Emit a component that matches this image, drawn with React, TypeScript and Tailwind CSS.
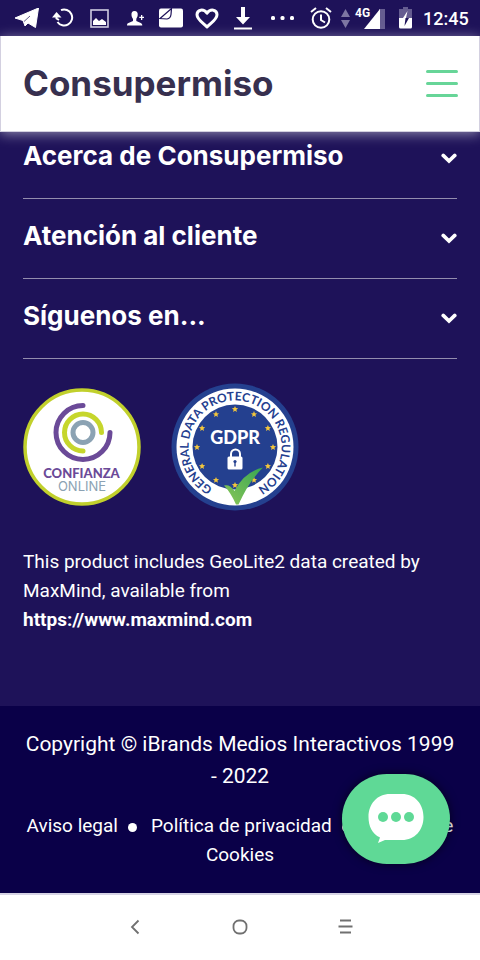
import type { ReactNode } from "react";

const sections = ["Acerca de Consupermiso", "Atención al cliente", "Síguenos en..."];

function StatusCell({ children }: { children: ReactNode }) {
  return <span className="flex w-9 shrink-0 justify-center">{children}</span>;
}

function StatusBar() {
  return (
    <div className="flex h-9 items-center bg-[#1e1259] pl-[9px] text-white">
      <StatusCell>
        <svg width="24" height="20" viewBox="0 0 24 20">
          <path d="M23.500 0 20.500 19.500 13 15l-3 3-2-5.500L0 10z" fill="currentColor" stroke="currentColor" strokeLinejoin="round" />
          <path d="m9 13.500 6-5.500" stroke="#1e1259" strokeWidth=".7" />
        </svg>
      </StatusCell>
      <StatusCell>
        <svg width="22" height="20" viewBox="0 0 22 20" fill="none">
          <path d="M9 2.200A8 8 0 1 1 5.500 14" stroke="currentColor" strokeWidth="2" />
          <path d="M4.500 7v3.500L7 12" stroke="currentColor" strokeWidth="2" />
          <path d="M0 9.500 4.500 4 9.500 9.500z" fill="currentColor" />
        </svg>
      </StatusCell>
      <StatusCell>
        <svg width="19" height="19" viewBox="0 0 19 19" fill="none">
          <rect x="1" y="1" width="17" height="17" stroke="#cfcce0" strokeWidth="1.600" />
          <path d="M3 16v-4l3-3 3 3 3-2 4 3v3z" fill="currentColor" />
        </svg>
      </StatusCell>
      <StatusCell>
        <svg width="17" height="15" viewBox="0 0 17 15" fill="currentColor">
          <path d="M7.500 0C10 0 11 1.700 10.700 4.200 10.500 6 9.500 7 9.300 8v2l4.500 2c1 .5 1.500 1.300 1.500 2.500H0C0 13 .5 12.300 1.500 12L6 10V8C5.500 7 4.700 6 4.500 4.200 4.300 1.700 5 0 7.500 0z" />
          <path d="M14 4h1.300v1.800H17v1.300h-1.700V9H14V7.100h-1.700V5.800H14z" />
        </svg>
      </StatusCell>
      <StatusCell>
        <svg width="24" height="20" viewBox="0 0 24 20">
          <rect width="24" height="19" y=".5" rx="2" fill="currentColor" />
          <path d="M1 10.500 12.500.5 12 6.500q-.5 4-4 4.500z" fill="currentColor" stroke="#1e1259" strokeWidth="1.200" />
        </svg>
      </StatusCell>
      <StatusCell>
        <svg width="24" height="21" viewBox="0 0 24 21" fill="none">
          <path
            d="M12 19C8 15 2 11.500 2 6.800 2 1.500 8.500.3 12 5.200 15.500.3 22 1.500 22 6.800 22 11.500 16 15 12 19z"
            stroke="currentColor"
            strokeWidth="3"
            strokeLinejoin="round"
          />
        </svg>
      </StatusCell>
      <StatusCell>
        <svg width="20" height="23" viewBox="0 0 20 23" fill="currentColor">
          <path d="M8 0h4v10h5l-7 7.500L3 10h5zM1 20.500h18v2H1z" />
        </svg>
      </StatusCell>
      <span className="flex w-11 shrink-0 justify-center">
        <svg width="24" height="4" viewBox="0 0 24 4" fill="currentColor">
          <rect width="4" height="4" rx="1.500" />
          <rect x="9.500" width="4" height="4" rx="1.500" />
          <rect x="19" width="4" height="4" rx="1.500" />
        </svg>
      </span>
      <span className="flex w-8 shrink-0 justify-center">
        <svg width="22" height="22" viewBox="0 0 22 22" fill="none" stroke="currentColor" strokeWidth="2">
          <circle cx="11" cy="12.500" r="8.300" />
          <path d="M11 7.500v5.500l4 2.500M1 5l5-4M21 5l-5-4" />
        </svg>
      </span>
      <span className="flex w-4 shrink-0 justify-center">
        <svg width="9" height="19" viewBox="0 0 9 19" fill="#7d76a2">
          <path d="M4.500 0 9 8H0zM4.500 19 0 11h9z" />
        </svg>
      </span>
      <svg className="shrink-0" width="34" height="24" viewBox="0 0 34 24">
        <path d="M26 3h6v20h-6z" fill="#655c90" />
        <path d="M11 23 27 3v20z" fill="#fff" />
        <text x="2" y="11" fill="#fff" fontFamily="Roboto, sans-serif" fontSize="12" fontWeight="700">
          4G
        </text>
      </svg>
      <StatusCell>
        <svg width="13" height="22" viewBox="0 0 13 22">
          <path d="M4 0h5v2h4v9H0V2h4z" fill="#655c90" />
          <path d="M0 11h13v9q0 1.500-1.500 1.500h-10Q0 21.500 0 20z" fill="#fff" />
          <path d="M8.500 4 4 11h3z" fill="#fff" />
          <path d="M6.500 11H10l-4.500 8z" fill="#1e1259" />
        </svg>
      </StatusCell>
      <span className="text-[18px] font-medium">12:45</span>
    </div>
  );
}

function Header() {
  return (
    <header className="relative z-10 flex h-24 items-center justify-between border-x border-b border-[#d3d0e0] bg-white pr-[21px] pl-[22px] shadow-[0_2px_12px_rgba(255,255,255,0.5)]">
      <a href="#inicio" className="pb-0.5 font-[Inter,sans-serif] text-[35px] leading-10 font-bold text-[#37304f]">
        Consupermiso
      </a>
      <button type="button" aria-label="Menú" className="flex w-8 flex-col gap-[9px]">
        <span className="h-[3px] w-full rounded-sm bg-[#67d598]" />
        <span className="h-[3px] w-full rounded-sm bg-[#67d598]" />
        <span className="h-[3px] w-full rounded-sm bg-[#67d598]" />
      </button>
    </header>
  );
}

function ConfianzaBadge() {
  return (
    <svg width="118" height="118" viewBox="0 0 118 118" role="img" aria-label="Confianza Online">
      <circle cx="59" cy="59" r="57" fill="#fff" stroke="#c1d02c" strokeWidth="3.500" />
      <g fill="none" strokeWidth="5" strokeLinecap="round">
        <circle cx="60" cy="44.500" r="10" stroke="#8ba2b3" />
        <path d="M78.500 44.500A18.500 18.500 0 1 0 60 63" stroke="#c6d62c" />
        <path d="M60 17.500A27 27 0 1 0 87 44.500" stroke="#6b4a98" />
      </g>
      <text x="58.500" y="90" textAnchor="middle" fontFamily="Lato, sans-serif" fontSize="13" fontWeight="900" fill="#6b4a98">
        CONFIANZA
      </text>
      <text x="59" y="103" textAnchor="middle" fontFamily="Inter, sans-serif" fontSize="13" fill="#8ba2b3">
        ONLINE
      </text>
    </svg>
  );
}

function GdprBadge() {
  const angles = [0, 30, 60, 90, 120, 150, 180, 210, 240, 270, 300, 330];
  return (
    <svg width="128" height="128" viewBox="0 0 128 128" role="img" aria-label="GDPR">
      <defs>
        <path id="gdpr-ring" d="M64 110.500A46.500 46.500 0 1 1 64.100 110.500" />
        <linearGradient id="gdpr-check" x1="0" y1="1" x2="1" y2="0">
          <stop offset="0" stopColor="#8bc657" />
          <stop offset="1" stopColor="#36a653" />
        </linearGradient>
      </defs>
      <circle cx="64" cy="64" r="63.500" fill="#24408f" />
      <circle cx="64" cy="64" r="58.500" fill="#fff" />
      <circle cx="64" cy="64" r="42.500" fill="#24408f" />
      <text fontFamily="Lato, sans-serif" fontSize="12" fontWeight="700" fill="#24408f" textAnchor="middle">
        <textPath href="#gdpr-ring" startOffset="50%">
          GENERAL DATA PROTECTION REGULATION
        </textPath>
      </text>
      {angles.map((angle) => (
        <g key={angle} transform={`rotate(${angle} 64 64) translate(64 26) rotate(${-angle})`}>
          <path d="m0-3 .9 2.100 2.200.2-1.700 1.400.5 2.200L0 1.700l-1.900 1.200.5-2.200-1.700-1.400 2.200-.2z" fill="#f3c63c" />
        </g>
      ))}
      <text x="64" y="61" textAnchor="middle" fontFamily="Lato, sans-serif" fontSize="18" fontWeight="900" fill="#fff">
        GDPR
      </text>
      <path d="M60 74v-3a4.500 4.500 0 0 1 9 0v3" fill="none" stroke="#fff" strokeWidth="2" />
      <rect x="56.500" y="73.500" width="15" height="13" rx="1.500" fill="#fff" />
      <circle cx="64" cy="78.500" r="1.600" fill="#24408f" />
      <path d="M63.300 79h1.400v4.500h-1.400z" fill="#24408f" />
      <path d="M53 102.500q6-1.500 10.500 5.500Q73 89 92 84.500 78 98 67.500 121.500h-2.500Q60 110 53 102.500z" fill="url(#gdpr-check)" />
    </svg>
  );
}

function Chevron() {
  return (
    <svg width="16" height="11" viewBox="0 0 16 11" fill="none" stroke="currentColor" strokeWidth="3.600">
      <path d="m2.200 2.400 5.800 5.700 5.800-5.700" strokeLinecap="round" />
    </svg>
  );
}

function Dot() {
  return <span className="mr-3.5 ml-2.5 inline-block size-[9px] rounded-full bg-white" />;
}

function ChatButton() {
  return (
    <button
      type="button"
      aria-label="Chat"
      className="fixed right-[30px] bottom-24 z-20 flex h-[90px] w-[108px] items-center justify-center rounded-full bg-[#5fd996] shadow-[0_0_10px_rgba(0,0,0,0.6)]"
    >
      <svg width="56" height="50" viewBox="0 0 56 50">
        <path
          d="M22 0h12C47 0 55.500 10 55.500 23S47 46 34 46H17l-7 3 2-5.500C4 40 .5 32 .5 23 .5 10 9 0 22 0z"
          fill="#fff"
        />
        <g fill="#5fd996">
          <circle cx="15" cy="23" r="5" />
          <circle cx="28" cy="23" r="5" />
          <circle cx="41" cy="23" r="5" />
        </g>
      </svg>
    </button>
  );
}

function NavBar() {
  return (
    <nav className="relative flex h-[67px] items-center justify-center gap-[81px] border-t-2 border-[#d6d3e4] bg-white pb-0.5 text-[#707070]">
      <button type="button" aria-label="Atrás" className="flex w-6 justify-center">
        <svg width="10" height="16" viewBox="0 0 10 16" fill="none" stroke="currentColor" strokeWidth="1.800">
          <path d="M8.500 1.500 2 8l6.500 6.500" />
        </svg>
      </button>
      <button type="button" aria-label="Inicio" className="flex w-6 justify-center">
        <svg width="16" height="16" viewBox="0 0 16 16" fill="none" stroke="currentColor" strokeWidth="1.800">
          <rect x="1.500" y="1.500" width="13" height="13" rx="5.500" />
        </svg>
      </button>
      <button type="button" aria-label="Recientes" className="flex w-6 justify-center">
        <svg width="15" height="15" viewBox="0 0 15 15" fill="none" stroke="currentColor" strokeWidth="2">
          <path d="M2 1.500h11M.5 7.500h14M2 13.500h11" />
        </svg>
      </button>
    </nav>
  );
}

export default function App() {
  return (
    <div className="flex min-h-screen flex-col bg-[#1e1259] font-[Roboto,sans-serif] text-white">
      <StatusBar />
      <Header />
      <main className="-mt-[13px] grow px-[23px]">
        {sections.map((title) => (
          <button
            key={title}
            type="button"
            className="flex h-20 w-full items-center justify-between border-b border-[#938dae] text-left"
          >
            <span className="pb-1.5 font-[Inter,sans-serif] text-[26px] leading-8 font-bold">{title}</span>
            <Chevron />
          </button>
        ))}
        <div className="mt-6 flex items-center gap-[30px]">
          <ConfianzaBadge />
          <GdprBadge />
        </div>
        <p className="mt-9 text-[19px] leading-[29px]">
          This product includes GeoLite2 data created by MaxMind, available from{" "}
          <a href="https://www.maxmind.com" className="block font-bold">
            https://www.maxmind.com
          </a>
        </p>
      </main>
      <footer className="bg-[#0a0048] px-[22px] pt-[22px] pb-6 text-center">
        <p className="text-[21px] leading-8">Copyright © iBrands Medios Interactivos 1999 - 2022</p>
        <p className="mt-[19px] text-[19px] leading-[29px]">
          <a href="#aviso">Aviso legal</a>
          <Dot />
          <a href="#privacidad">Política de privacidad</a>
          <Dot />
          <a href="#cookies">Política de Cookies</a>
        </p>
      </footer>
      <NavBar />
      <ChatButton />
    </div>
  );
}
